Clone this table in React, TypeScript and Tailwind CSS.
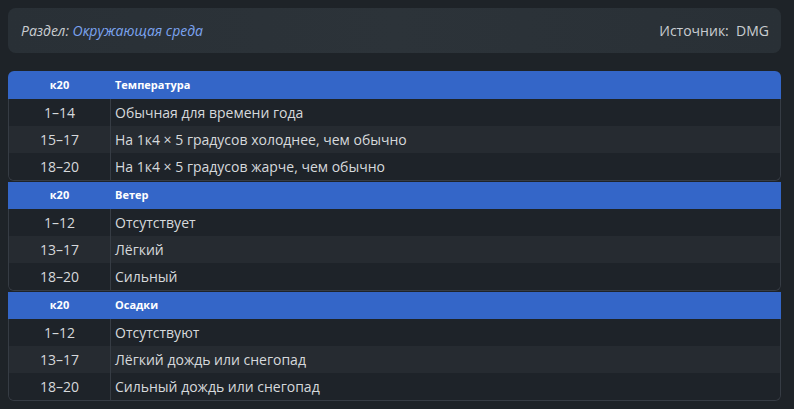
import * as React from "react"

interface Row {
  range: string
  text: string
}

interface Table {
  title: string
  rows: Row[]
}

const tables: Table[] = [
  {
    title: "Температура",
    rows: [
      { range: "1–14", text: "Обычная для времени года" },
      { range: "15–17", text: "На 1к4 × 5 градусов холоднее, чем обычно" },
      { range: "18–20", text: "На 1к4 × 5 градусов жарче, чем обычно" },
    ],
  },
  {
    title: "Ветер",
    rows: [
      { range: "1–12", text: "Отсутствует" },
      { range: "13–17", text: "Лёгкий" },
      { range: "18–20", text: "Сильный" },
    ],
  },
  {
    title: "Осадки",
    rows: [
      { range: "1–12", text: "Отсутствуют" },
      { range: "13–17", text: "Лёгкий дождь или снегопад" },
      { range: "18–20", text: "Сильный дождь или снегопад" },
    ],
  },
]

function RollTable({ table, first }: { table: Table; first: boolean }) {
  return (
    <div>
      {/* Header */}
      <div
        className={
          first
            ? "flex h-[28px] items-center bg-[#3466c8] rounded-t-md text-[11px] font-bold text-white"
            : "flex h-[27px] items-center bg-[#3466c8] text-[11px] font-bold text-white"
        }
      >
        <div className="w-[103px] text-center">к20</div>
        <div className="pl-[4px]">{table.title}</div>
      </div>

      {/* Rows */}
      <div className="border-x border-b border-[#363c44] rounded-b-md overflow-hidden">
        {table.rows.map((row, i) => (
          <div
            key={row.range}
            className={
              i % 2 === 1
                ? "flex h-[27px] items-center bg-[#262b31] text-[14px] text-[#d6d9dc]"
                : "flex h-[27px] items-center bg-[#1e2329] text-[14px] text-[#d6d9dc]"
            }
          >
            <div className="w-[102px] h-full flex items-center justify-center border-r border-[#363c44]">
              {row.range}
            </div>
            <div className="pl-[4px]">{row.text}</div>
          </div>
        ))}
      </div>
    </div>
  )
}

export default function App() {
  return (
    <div
      className="w-[794px] h-[409px] bg-[#1e2328] pl-2 pr-[13px] pt-2"
      style={{ fontFamily: '"Open Sans", "Noto Sans", sans-serif' }}
    >
      {/* Section bar */}
      <div className="h-[45px] flex items-center justify-between rounded-lg bg-gradient-to-r from-[#293036] via-[#2c3339] to-[#293036] pl-[13px] pr-[12px] text-[14px]">
        <div className="italic text-[#c9cdd1]">
          Раздел: <span className="text-[#7ba3ef]">Окружающая среда</span>
        </div>
        <div className="text-[#c9cdd1]">
          Источник:&nbsp; DMG
        </div>
      </div>

      <div className="mt-[18px] flex flex-col gap-px">
        {tables.map((t, i) => (
          <RollTable key={t.title} table={t} first={i === 0} />
        ))}
      </div>
    </div>
  )
}
